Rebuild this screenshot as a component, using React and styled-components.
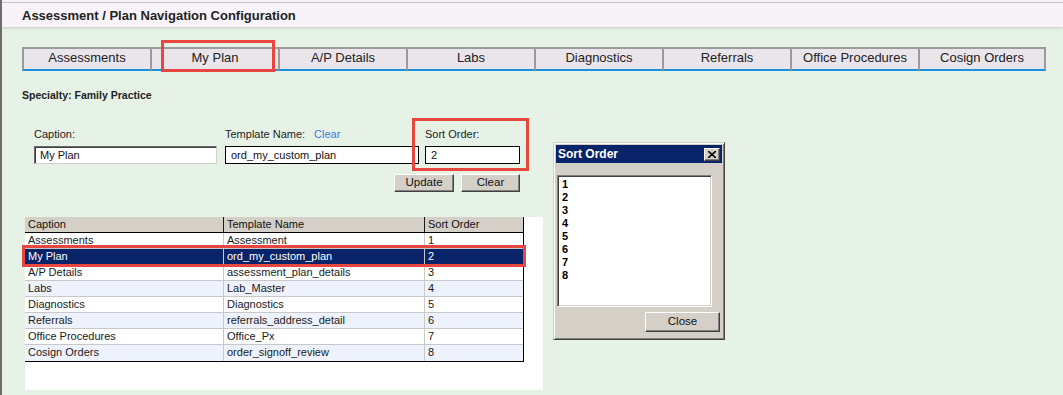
import React from 'react';
import styled, { createGlobalStyle } from 'styled-components';

const GlobalStyle = createGlobalStyle`
  html, body {
    margin: 0;
    padding: 0;
    background: #e7f2e7;
  }
  * {
    box-sizing: border-box;
  }
`;

const tabs = [
  'Assessments',
  'My Plan',
  'A/P Details',
  'Labs',
  'Diagnostics',
  'Referrals',
  'Office Procedures',
  'Cosign Orders',
];

const rows = [
  { caption: 'Assessments', template: 'Assessment', order: 1 },
  { caption: 'My Plan', template: 'ord_my_custom_plan', order: 2 },
  { caption: 'A/P Details', template: 'assessment_plan_details', order: 3 },
  { caption: 'Labs', template: 'Lab_Master', order: 4 },
  { caption: 'Diagnostics', template: 'Diagnostics', order: 5 },
  { caption: 'Referrals', template: 'referrals_address_detail', order: 6 },
  { caption: 'Office Procedures', template: 'Office_Px', order: 7 },
  { caption: 'Cosign Orders', template: 'order_signoff_review', order: 8 },
];

const Page = styled.div`
  position: relative;
  width: 1063px;
  height: 395px;
  overflow: hidden;
  background: #e7f2e7;
  border-left: 2px solid #6e6e6e;
  font-family: 'Liberation Sans', Arial, sans-serif;
  color: #1a1a1a;
`;

const Header = styled.div`
  height: 27px;
  padding: 4px 0 0 20px;
  background: linear-gradient(#f6f3f6 0 2px, #c9c4c9 2px 3px, #f8f3f8 3px);
  box-shadow: 0 1px 3px rgba(0, 0, 0, 0.16);
  font-size: 13px;
  font-weight: bold;
  line-height: 23px;
  color: #222;
`;

const Content = styled.div`
  padding: 0 17px 0 20px;
`;

const TabStrip = styled.div`
  display: grid;
  grid-template-columns: repeat(8, 128px);
  margin-top: 20px;
`;

const Tab = styled.div`
  position: relative;
  height: 24px;
  background: #e9e5ea;
  border-top: 2px solid #9b9b9b;
  border-left: 2px solid #9b9b9b;
  border-right: ${(p) => (p.$last ? '2px solid #9b9b9b' : '0')};
  border-bottom: 2px solid #1b90dc;
  font-size: 13px;
  line-height: 17px;
  text-align: center;
  color: #222;
`;

const Highlight = styled.div`
  position: absolute;
  left: ${(p) => p.$left}px;
  top: ${(p) => p.$top}px;
  width: ${(p) => p.$width}px;
  height: ${(p) => p.$height}px;
  border: 3px solid #e8473f;
  pointer-events: none;
  z-index: 2;
`;

const Specialty = styled.div`
  margin-top: 18px;
  font-size: 10.5px;
  font-weight: bold;
  line-height: 13px;
  color: #222;
`;

const Form = styled.div`
  width: 498px;
  margin-top: 26px;
  padding-left: 12px;
`;

const FieldRow = styled.div`
  display: flex;
  gap: 8px;
`;

const Field = styled.div`
  position: relative;
  width: ${(p) => p.$width}px;
  margin-left: ${(p) => p.$shift || 0}px;
`;

const Label = styled.div`
  height: 12px;
  font-size: 11px;
  line-height: 12px;
  color: #222;
  white-space: nowrap;
`;

const ClearLink = styled.span`
  margin-left: 9px;
  color: #3b7be6;
`;

const Input = styled.div`
  height: 18px;
  margin-top: 6px;
  padding-left: 5px;
  background: #fff;
  font-size: 11px;
  line-height: 16px;
  color: #111;
  border: 1px solid ${(p) => (p.$inset ? '#d4d0c8' : '#000')};
  ${(p) =>
    p.$inset &&
    `border-color: #6a6a6a #d4d0c8 #d4d0c8 #6a6a6a;
     box-shadow: inset 1px 1px 0 #404040;`}
`;

const ButtonRow = styled.div`
  display: flex;
  justify-content: flex-end;
  gap: 7px;
  margin-top: 10px;
`;

const Button = styled.div`
  width: ${(p) => p.$width}px;
  height: ${(p) => p.$height || 18}px;
  background: #d4d0c8;
  border: 1px solid;
  border-color: #ffffff #404040 #404040 #ffffff;
  box-shadow: inset -1px -1px 0 #808080;
  font-size: 11.5px;
  line-height: ${(p) => (p.$height || 18) - 3}px;
  text-align: center;
  color: #111;
`;

const Panel = styled.div`
  width: 518px;
  height: 173px;
  margin: 25px 0 0 3px;
  background: #fff;
`;

const Grid = styled.div`
  width: 499px;
  border-right: 1px solid #000;
  border-bottom: 1px solid #000;
`;

const HeadRow = styled.div`
  display: grid;
  grid-template-columns: 199px 201px 98px;
  height: 16px;
  background: #d4d0c8;
  border-bottom: 1px solid #000;
`;

const HeadCell = styled.div`
  padding-left: 3px;
  font-size: 11px;
  line-height: 15px;
  color: #111;
  border-right: ${(p) => (p.$last ? '0' : '1px solid #1a1a1a')};
`;

const Row = styled.div`
  position: relative;
  display: grid;
  grid-template-columns: 199px 201px 98px;
  height: 16px;
  background: ${(p) => (p.$selected ? '#0a246a' : p.$alt ? '#eef2fc' : '#fff')};
  color: ${(p) => (p.$selected ? '#fff' : '#1a1a1a')};
  border-bottom: ${(p) => (p.$end ? '0' : '1px solid #c8c8c8')};
`;

const Cell = styled.div`
  padding-left: 3px;
  font-size: 11px;
  line-height: 15px;
  white-space: nowrap;
  border-right: ${(p) => (p.$last ? '0' : '1px solid #c8c8c8')};
`;

const Dialog = styled.div`
  position: absolute;
  left: 551px;
  top: 142px;
  width: 172px;
  height: 198px;
  padding: 2px;
  background: #d4d0c8;
  border: 1px solid;
  border-color: #d4d0c8 #404040 #404040 #d4d0c8;
  box-shadow: inset 1px 1px 0 #fff, inset -1px -1px 0 #808080;
  z-index: 3;
`;

const Caption = styled.div`
  display: flex;
  align-items: center;
  justify-content: space-between;
  height: 18px;
  padding: 0 2px 0 2px;
  background: #0a246a;
  color: #fff;
  font-size: 12px;
  font-weight: bold;
`;

const CloseBox = styled.div`
  display: flex;
  align-items: center;
  justify-content: center;
  width: 16px;
  height: 13px;
  background: #d4d0c8;
  border: 1px solid;
  border-color: #ffffff #404040 #404040 #ffffff;
  box-shadow: inset -1px -1px 0 #808080;
`;

const ListBox = styled.div`
  width: 155px;
  height: 132px;
  margin: 12px 0 0 1px;
  padding: 2px 2px;
  background: #fff;
  border: 1px solid;
  border-color: #808080 #ffffff #ffffff #808080;
  box-shadow: inset 1px 1px 0 #404040, inset -1px -1px 0 #d4d0c8;
`;

const ListItem = styled.div`
  padding-left: 2px;
  font-size: 11px;
  font-weight: bold;
  line-height: 13px;
  color: #000;
`;

const DialogFooter = styled.div`
  display: flex;
  justify-content: flex-end;
  margin-top: 5px;
  padding-right: 2px;
`;

export default function App() {
  return (
    <>
      <GlobalStyle />
      <Page>
        <Header>Assessment / Plan Navigation Configuration</Header>
        <Content>
          <TabStrip>
            {tabs.map((t, i) => (
              <Tab key={t} $last={i === tabs.length - 1}>
                {t}
                {t === 'My Plan' && (
                  <Highlight $left={9} $top={-9} $width={114} $height={32} />
                )}
              </Tab>
            ))}
          </TabStrip>

          <Specialty>Specialty: Family Practice</Specialty>

          <Form>
            <FieldRow>
              <Field $width={183}>
                <Label>Caption:</Label>
                <Input $inset>My Plan</Input>
              </Field>
              <Field $width={194}>
                <Label>
                  Template Name:<ClearLink>Clear</ClearLink>
                </Label>
                <Input>ord_my_custom_plan</Input>
              </Field>
              <Field $width={95} $shift={-2}>
                <Label>Sort Order:</Label>
                <Input>2</Input>
                <Highlight $left={-13} $top={-10} $width={117} $height={53} />
              </Field>
            </FieldRow>
            <ButtonRow>
              <Button $width={60}>Update</Button>
              <Button $width={59}>Clear</Button>
            </ButtonRow>
          </Form>

          <Panel>
            <Grid>
              <HeadRow>
                <HeadCell>Caption</HeadCell>
                <HeadCell>Template Name</HeadCell>
                <HeadCell $last>Sort Order</HeadCell>
              </HeadRow>
              {rows.map((r, i) => (
                <Row
                  key={r.caption}
                  $alt={i % 2 === 1}
                  $selected={r.order === 2}
                  $end={i === rows.length - 1}
                >
                  <Cell>{r.caption}</Cell>
                  <Cell>{r.template}</Cell>
                  <Cell $last>{r.order}</Cell>
                  {r.order === 2 && (
                    <Highlight $left={-3} $top={-4} $width={504} $height={22} />
                  )}
                </Row>
              ))}
            </Grid>
          </Panel>
        </Content>

        <Dialog>
          <Caption>
            <span>Sort Order</span>
            <CloseBox>
              <svg width="8" height="7" viewBox="0 0 8 7">
                <path d="M0 0 L8 7 M8 0 L0 7" stroke="#000" strokeWidth="1.6" />
              </svg>
            </CloseBox>
          </Caption>
          <ListBox>
            {rows.map((r) => (
              <ListItem key={r.order}>{r.order}</ListItem>
            ))}
          </ListBox>
          <DialogFooter>
            <Button $width={75} $height={20}>
              Close
            </Button>
          </DialogFooter>
        </Dialog>
      </Page>
    </>
  );
}
